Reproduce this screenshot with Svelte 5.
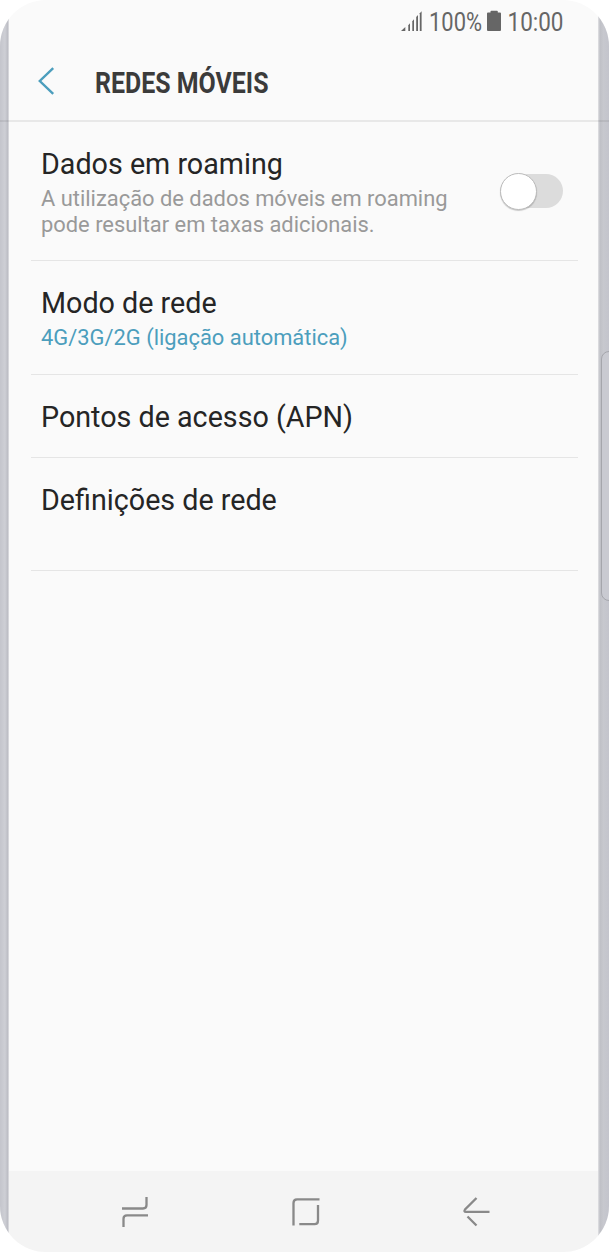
<script>
  let roaming = false;

  const items = [
    {
      title: 'Dados em roaming',
      lines: ['A utilização de dados móveis em roaming', 'pode resultar em taxas adicionais.'],
      toggle: true,
      size: 'large'
    },
    { title: 'Modo de rede', lines: ['4G/3G/2G (ligação automática)'], active: true, size: 'medium' },
    { title: 'Pontos de acesso (APN)', lines: [], size: 'small' },
    { title: 'Definições de rede', lines: [], size: 'medium' }
  ];
</script>

<div class="phone">
  <div class="edge left"></div>

  <div class="screen">
    <header>
      <div class="status">
        <svg width="210" height="44" viewBox="390 0 210 44">
          <g fill="#666">
            <path d="M401 31L405.3 27V31z" />
            <path d="M408.3 25.3L410 23.3V31H408.3z" />
            <path d="M412.3 21.3L414 19.3V31H412.3z" />
            <path d="M416.2 17L418 15V31H416.2z" />
            <path d="M419.8 13.2L421.6 11.2V31H419.8z" />
            <path d="M487 13.5Q487 12.5 488 12.5H490.5V11.5Q490.5 10.7 491.3 10.7H497Q497.8 10.7 497.8 11.5V12.5H500Q501 12.5 501 13.5V30Q501 31 500 31H488Q487 31 487 30z" />
            <text x="429" y="30.7" textLength="53" lengthAdjust="spacingAndGlyphs">100%</text>
            <text x="507.5" y="30.7" textLength="56" lengthAdjust="spacingAndGlyphs">10:00</text>
          </g>
        </svg>
      </div>
      <div class="bar">
        <svg class="back" width="18" height="28" viewBox="0 0 18 28">
          <path d="M16.2 1.2L2.8 14L16.2 26.8" fill="none" stroke="#4c9ebd" stroke-width="2.4" />
        </svg>
        <svg class="heading" width="200" height="50" viewBox="-10 0 200 50">
          <text x="0" y="36.6" textLength="173.5" lengthAdjust="spacingAndGlyphs">REDES MÓVEIS</text>
        </svg>
      </div>
    </header>

    <main>
      {#each items as item}
        <section class={item.size}>
          <div>
            <h2>{item.title}</h2>
            {#each item.lines as line}
              <p class:active={item.active}>{line}</p>
            {/each}
          </div>
          {#if item.toggle}
            <button class="switch" class:on={roaming} aria-label={item.title} on:click={() => (roaming = !roaming)}>
              <span></span>
            </button>
          {/if}
        </section>
      {/each}
    </main>

    <nav>
      <svg width="32" height="32" viewBox="0 0 32 32">
        <path d="M3 12.5H24Q27.5 12.5 27.5 9V1M29 19.3H8Q4.5 19.3 4.5 22.8V31" />
      </svg>
      <svg width="32" height="32" viewBox="0 0 32 32">
        <path d="M3.5 29.5V7Q3.5 3.3 7 3.3H29.5M28 9V24.5Q28 28.2 24.5 28.2H9.3" />
      </svg>
      <svg width="32" height="32" viewBox="0 0 32 32">
        <path d="M15.5 2L4 13.5Q2.5 15.9 5 15.9H28.5M6.5 20.5L15.5 29.5" />
      </svg>
    </nav>
  </div>

  <div class="edge right"><div class="key"></div></div>
</div>

<style>
  :global(body) {
    background: #fff;
  }

  .phone {
    display: flex;
    position: relative;
    width: 609px;
    height: 1252px;
    overflow: hidden;
    border-radius: 46px;
    background: #fafafa;
    font-family: Roboto, 'Liberation Sans', sans-serif;
  }

  .edge {
    flex: none;
    box-sizing: border-box;
  }

  .left {
    width: 9px;
    background: linear-gradient(90deg, #c4c5cc, #cecfd5 55%, #bdbec5 85%, #e4e4e7);
  }

  .right {
    width: 11px;
    padding-top: 351px;
    background: linear-gradient(90deg, #e2e2e5, #bfc0c6 18%, #c7c8ce 50%, #c3c4cc);
  }

  .key {
    box-sizing: border-box;
    width: 16px;
    height: 250px;
    margin-left: 3px;
    border: 1px solid #a5a6ac;
    border-radius: 9px;
    background: #c9cad1;
  }

  .screen {
    display: flex;
    flex: 1;
    flex-direction: column;
  }

  header {
    position: relative;
    height: 122px;
  }

  /* the divider runs over the side edges too */
  header::after {
    content: '';
    position: absolute;
    left: -9px;
    right: -11px;
    bottom: 0;
    height: 2px;
    background: rgba(0, 0, 0, 0.07);
  }

  .status {
    display: flex;
    justify-content: flex-end;
    height: 44px;
    margin-right: -2px;
  }

  .status text {
    font-size: 25.3px;
  }

  .bar {
    display: flex;
    align-items: center;
    height: 74px;
    padding-left: 28px;
  }

  .heading {
    margin: 0 0 0 30px;
    overflow: visible;
  }

  .heading text {
    fill: #3b3b3b;
    font-size: 29px;
    font-weight: 700;
  }

  main {
    flex: 1;
    padding: 0 20px 0 22px;
  }

  section {
    display: flex;
    justify-content: space-between;
    box-sizing: border-box;
    padding: 25px 15px 0 10px;
    border-bottom: 1px solid #e5e5e5;
  }

  .large {
    height: 139px;
  }

  .medium {
    height: 113.5px;
  }

  .small {
    height: 83px;
  }

  h2 {
    margin: 0;
    color: #252525;
    font-size: 28.7px;
    font-weight: 400;
    line-height: 34px;
    white-space: nowrap;
  }

  p {
    margin: 0;
    color: #999;
    font-size: 21.9px;
    line-height: 26px;
    white-space: nowrap;
  }

  h2 + p {
    margin-top: 5px;
  }

  .active {
    color: #4c9ebd;
  }

  .switch {
    width: 62px;
    height: 34px;
    margin-top: 27px;
    padding: 0;
    border: 0;
    border-radius: 17px;
    background: #dcdcdc;
  }

  .switch span {
    display: block;
    box-sizing: border-box;
    width: 37px;
    height: 37px;
    margin: -1px 0 0 -1px;
    border: 1px solid #bbb;
    border-radius: 50%;
    background: #fff;
    box-shadow: 0 1px 1px rgba(0, 0, 0, 0.2);
  }

  .switch.on span {
    margin-left: 26px;
  }

  nav {
    display: flex;
    gap: 139px;
    box-sizing: border-box;
    height: 81px;
    padding: 25px 0 0 110px;
    background: #f4f4f4;
  }

  nav path {
    fill: none;
    stroke: #898989;
    stroke-width: 2.3;
  }
</style>
